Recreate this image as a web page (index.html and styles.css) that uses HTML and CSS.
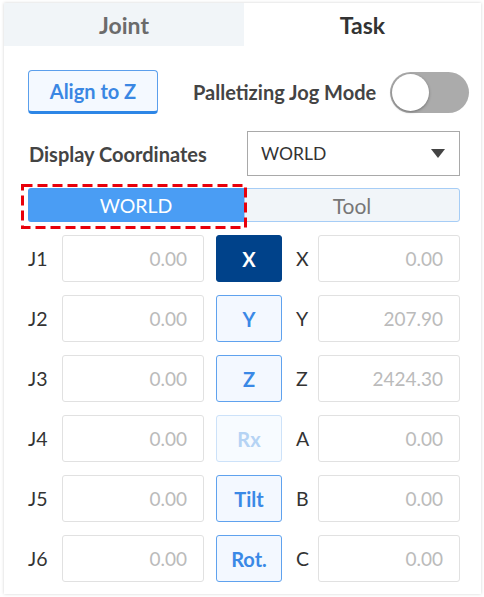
FILE: index.html
```html
<!DOCTYPE html>
<html>
<head>
<meta charset="utf-8">
<link rel="stylesheet" href="styles.css">
</head>
<body>
<div class="card">
  <div class="tabs">
    <div class="tab tab-off">Joint</div>
    <div class="tab tab-on">Task</div>
  </div>
  <div class="content">
    <div class="row-top">
      <button class="align-btn">Align to Z</button>
      <span class="pal-label">Palletizing Jog Mode</span>
      <div class="toggle"><div class="knob"></div></div>
    </div>
    <div class="row-disp">
      <span class="disp-label">Display Coordinates</span>
      <div class="select"><span>WORLD</span><span class="caret"></span></div>
    </div>
    <div class="seg-wrap">
      <div class="seg">
        <div class="seg-item seg-on">WORLD</div>
        <div class="seg-item seg-off">Tool</div>
      </div>
      <svg class="dash" width="226" height="45" viewBox="0 0 226 45"><rect x="1.5" y="1.5" width="223" height="42" fill="none" stroke="#e8000b" stroke-width="3" stroke-dasharray="10 5"/></svg>
    </div>
    <div class="grid">
      <span class="jl">J1</span><div class="val">0.00</div><button class="axis axis-active">X</button><span class="al">X</span><div class="val">0.00</div>
      <span class="jl">J2</span><div class="val">0.00</div><button class="axis">Y</button><span class="al">Y</span><div class="val">207.90</div>
      <span class="jl">J3</span><div class="val">0.00</div><button class="axis">Z</button><span class="al">Z</span><div class="val">2424.30</div>
      <span class="jl">J4</span><div class="val">0.00</div><button class="axis axis-dis">Rx</button><span class="al">A</span><div class="val">0.00</div>
      <span class="jl">J5</span><div class="val">0.00</div><button class="axis">Tilt</button><span class="al">B</span><div class="val">0.00</div>
      <span class="jl">J6</span><div class="val">0.00</div><button class="axis">Rot.</button><span class="al">C</span><div class="val">0.00</div>
    </div>
  </div>
</div>
</body>
</html>
```
FILE: styles.css
```css
* { box-sizing: border-box; }
html, body { margin: 0; padding: 0; background: #fff; }
body {
  font-family: Lato, "Liberation Sans", sans-serif;
  color: #333;
  padding: 3px 3px 3px 4px;
}
.card {
  width: 477px;
  height: 591px;
  background: #fff;
  box-shadow: 0 0 3px rgba(0,0,0,0.18);
}
.tabs { display: flex; height: 43px; }
.tab {
  display: flex; align-items: center; justify-content: center;
  font-size: 23px; font-weight: 700;
}
.tab-off { width: 240px; background: #f1f5f8; color: #6b6b6b; }
.tab-on { flex: 1; background: #fff; color: #333; }
.content { padding: 24px 0 0 24px; }
.row-top { display: flex; align-items: center; height: 44px; }
.align-btn {
  width: 130px; height: 44px;
  background: #f4f9ff;
  border: 1px solid #5b9fec;
  border-bottom: 3px solid #2d86e6;
  border-radius: 4px;
  color: #3a87e3;
  font-family: inherit; font-size: 20px; font-weight: 700;
  padding: 0;
}
.pal-label {
  margin-left: 35px;
  font-size: 20px; font-weight: 700; color: #444;
  width: 197px;
  white-space: nowrap;
}
.toggle {
  width: 79px; height: 41px; border-radius: 21px;
  background: #ababab;
  display: flex; align-items: center; padding-left: 2px;
}
.knob {
  width: 37px; height: 37px; border-radius: 50%;
  background: #fff;
  box-shadow: 0 1px 3px rgba(0,0,0,0.35);
}
.row-disp { display: flex; align-items: center; margin-top: 17px; height: 45px; }
.disp-label { font-size: 20px; font-weight: 700; color: #444; width: 219px; padding-left: 1px; white-space: nowrap; }
.select {
  width: 213px; height: 45px;
  border: 1px solid #a9a9a9;
  display: flex; align-items: center; justify-content: space-between;
  padding: 0 14px 0 13px;
  font-size: 17.5px; color: #333;
}
.caret {
  width: 0; height: 0;
  border-left: 7px solid transparent;
  border-right: 7px solid transparent;
  border-top: 9px solid #444;
}
.seg-wrap { position: relative; margin-top: 12px; width: 432px; }
.seg {
  display: flex; height: 34px;
  font-size: 20px;
}
.seg-item { display: flex; align-items: center; justify-content: center; }
.seg-on { width: 216px; background: #4a9df4; color: #fff; border-radius: 3px 0 0 3px; font-size: 19.5px; }
.seg-off {
  flex: 1; background: #f1f5f9; color: #777;
  border: 1px solid #a6cdf6; border-radius: 0 3px 3px 0;
  font-size: 21px;
}
.dash {
  position: absolute; left: -7px; top: -4px;
  display: block;
}
.grid {
  display: grid;
  grid-template-columns: 34px 142px 78px 36px 142px;
  row-gap: 13px;
  margin-top: 13px;
  align-items: center;
}
.grid .axis { margin-left: 12px; width: 66px; }
.jl { font-size: 19.5px; color: #333; }
.al { font-size: 19.5px; color: #333; padding-left: 14px; }
.val {
  height: 47px;
  border: 1px solid #e1e1e1; border-radius: 3px;
  display: flex; align-items: center; justify-content: flex-end;
  padding-right: 16px;
  font-size: 19px; color: #bbb;
}
.axis {
  height: 47px;
  border: 1px solid #5fa2ee; border-radius: 3px;
  background: #f3f8ff;
  color: #3a89e6;
  font-family: inherit; font-size: 20px; font-weight: 700;
  padding: 0;
}
.axis-active { background: #00428a; border-color: #00428a; color: #fff; }
.axis-dis { background: #f7fbff; border-color: #cde2f9; color: #b5d3f4; }
```
